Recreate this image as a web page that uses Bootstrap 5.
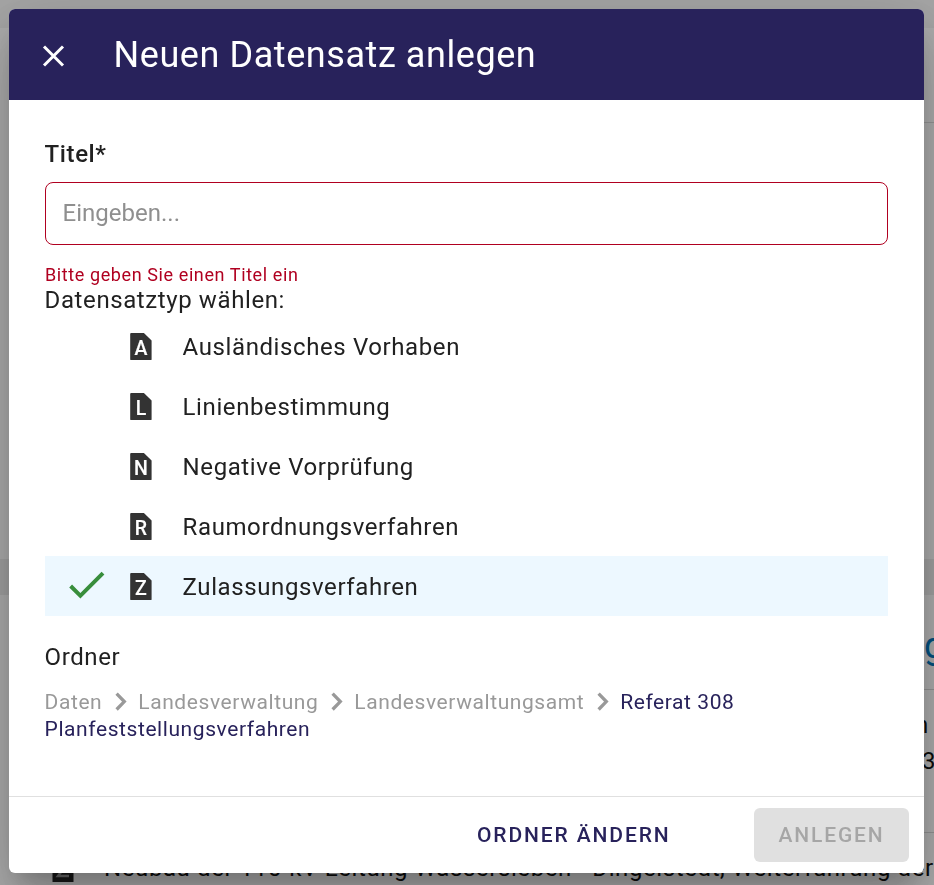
<!DOCTYPE html>
<html lang="de">
<head>
<meta charset="utf-8">
<meta name="viewport" content="width=device-width, initial-scale=1">
<title>Neuen Datensatz anlegen</title>
<link href="https://cdn.jsdelivr.net/npm/bootstrap@5.3.0/dist/css/bootstrap.min.css" rel="stylesheet">
<style>
  body { font-family: Roboto, "Liberation Sans", sans-serif; font-size: 24px; letter-spacing: .6px; color: #212121; height: 885px; }
  .page-top { height: 28px; background: #f5f5f5; }
  .page-toolbar { height: 95px; border-bottom: 1px solid #dcdcdc; margin-left: 24px; }
  .page-blank { height: 436px; }
  .page-band { height: 36px; background: #eeeeee; }
  .page-headline { height: 95px; border-bottom: 1px solid #d8d8d8; color: #0277bd; font-size: 36px; margin-left: 24px; padding: 28px 0 0 900px; line-height: 46px; }
  .page-entry { height: 143px; border-bottom: 1px solid #d8d8d8; line-height: 36px; margin-left: 24px; padding-top: 17px; color: #111; }
  .page-entry div:first-child { padding-left: 891px; }
  .page-entry div:last-child { padding-left: 898px; }
  .page-row { height: 52px; padding: 14px 0 0 46px; line-height: 42px; color: #111; }
  .page-row svg { margin-right: 24px; }
  .overlay { background: rgba(0,0,0,.32); padding: 9px 10px 12px 9px; }
  .dialog { border-radius: 6px; background: #fff; box-shadow: 0 16.5px 22.5px -10.5px rgba(0,0,0,.2), 0 36px 57px 4.5px rgba(0,0,0,.14), 0 13.5px 69px 12px rgba(0,0,0,.12); }
  .dialog-head { height: 91px; background: #28225b; color: #fff; padding-left: 27px; }
  .dialog-head h1 { font-size: 36px; font-weight: 400; letter-spacing: .57px; line-height: 48px; margin-left: 41.5px; }
  .dialog-main { padding: 36px 36px 0 35.6px; }
  .title-label { font-weight: 500; line-height: 36px; margin-bottom: 10px; }
  .title-input.form-control { height: 63px; border: 1px solid #b00020; border-radius: 8px; font-size: 24px; letter-spacing: 0; padding: 0 17px 2px; background: #fff; }
  .title-input::placeholder { color: #8f8f8f; }
  .title-error { color: #b00020; font-size: 18px; letter-spacing: .6px; line-height: 24px; margin: 18px 0 0 .4px; }
  .type-caption { line-height: 27px; margin-bottom: 2px; }
  .type-item.list-group-item { height: 60px; background: transparent; color: #212121; padding: 1px 0 0 18px; border-radius: 0; }
  .type-item.chosen { background: #edf8ff; }
  .tick { width: 48px; margin: -4px 12px 0 0; }
  .type-item span:last-child { margin-left: 24px; line-height: 36px; }
  .type-item text { fill: #fff; stroke: #fff; stroke-width: .15px; font-size: 19.5px; font-weight: 500; letter-spacing: 0; text-anchor: middle; }
  .folder-caption { margin-top: 23px; line-height: 36px; }
  .folder-path { margin-top: 14px; font-size: 21px; letter-spacing: .58px; line-height: 27px; color: #999; }
  .folder-path svg { margin: -4px 11.6px 0 12.4px; }
  .folder-path b { color: #28225b; font-weight: 400; }
  .dialog-foot { height: 77px; border-top: 1px solid #e0e0e0; padding-right: 15px; }
  .act.btn { font-size: 21px; font-weight: 500; letter-spacing: 1.875px; height: 54px; padding: 0 24px; border: 0; border-radius: 6px; color: #28225b; line-height: 54px; }
  .act.btn:disabled { background: #e0e0e0; color: #a6a6a6; opacity: 1; width: 155px; margin-left: 59.5px; }
</style>
<script src="https://cdn.jsdelivr.net/npm/bootstrap@5.3.0/dist/js/bootstrap.bundle.min.js"></script>
</head>
<body class="overflow-hidden bg-white">
<svg class="d-none" aria-hidden="true">
  <symbol id="sheet" viewBox="0 0 36 36"><path d="M8.100 4.100H20.900l7.700 7.300v18.800q0 .9-.9.9H8.100q-.9 0-.9-.9V5q0-.9.9-.9z" fill="#333"/></symbol>
  <symbol id="next" viewBox="0 0 12 19"><path d="M1.600 1.700 9.300 9.600 1.600 17.500" fill="none" stroke="#999" stroke-width="3.300"/></symbol>
</svg>

<div aria-hidden="true">
  <div class="page-top"></div>
  <div class="page-toolbar"></div>
  <div class="page-blank"></div>
  <div class="page-band"></div>
  <div class="page-headline text-nowrap">g</div>
  <div class="page-entry text-nowrap"><div>n</div><div>3</div></div>
  <div class="page-row d-flex text-nowrap">
    <svg class="flex-shrink-0" width="34" height="38"><path d="M6.500 6h14l7 7v22h-21z" fill="#222"/><path d="M12 16h10l-10 13h11" fill="none" stroke="#999" stroke-width="2.500"/></svg>
    <span>Neubau der 110-kV-Leitung Wassersleben - Dingelstedt, Weiterführung der</span>
  </div>
</div>

<div class="overlay position-fixed top-0 start-0 w-100 h-100">
  <div class="dialog d-flex flex-column h-100 overflow-hidden" role="dialog" aria-labelledby="dlgTitle">
    <header class="dialog-head d-flex align-items-center">
      <svg width="36" height="36" viewBox="0 0 36 36"><path d="M8 9.500 27 28.500M27 9.500 8 28.500" stroke="#fff" stroke-width="3" fill="none"/></svg>
      <h1 class="mb-0" id="dlgTitle">Neuen Datensatz anlegen</h1>
    </header>

    <main class="dialog-main flex-grow-1">
      <label class="title-label d-block" for="titel">Titel*</label>
      <input class="form-control title-input" id="titel" type="text" placeholder="Eingeben...">
      <div class="title-error">Bitte geben Sie einen Titel ein</div>
      <div class="type-caption">Datensatztyp wählen:</div>

      <div class="list-group list-group-flush" id="types">
        <div class="list-group-item type-item border-0 d-flex align-items-center"><span class="tick"></span><svg width="36" height="36"><use href="#sheet"/><text x="17.900" y="25.600">A</text></svg><span>Ausländisches Vorhaben</span></div>
        <div class="list-group-item type-item border-0 d-flex align-items-center"><span class="tick"></span><svg width="36" height="36"><use href="#sheet"/><text x="17.900" y="25.600">L</text></svg><span>Linienbestimmung</span></div>
        <div class="list-group-item type-item border-0 d-flex align-items-center"><span class="tick"></span><svg width="36" height="36"><use href="#sheet"/><text x="17.900" y="25.600">N</text></svg><span>Negative Vorprüfung</span></div>
        <div class="list-group-item type-item border-0 d-flex align-items-center"><span class="tick"></span><svg width="36" height="36"><use href="#sheet"/><text x="17.900" y="25.600">R</text></svg><span>Raumordnungsverfahren</span></div>
        <div class="list-group-item type-item chosen border-0 d-flex align-items-center"><span class="tick d-flex"><svg width="48" height="48" viewBox=".3 .2 24 24"><path d="M9 16.170 4.830 12l-1.420 1.410L9 19 21 7l-1.410-1.410z" fill="#388e3c"/></svg></span><svg width="36" height="36"><use href="#sheet"/><text x="17.900" y="25.600">Z</text></svg><span>Zulassungsverfahren</span></div>
      </div>

      <div class="folder-caption">Ordner</div>
      <div class="folder-path"><span>Daten</span><svg width="12" height="19"><use href="#next"/></svg><span>Landesverwaltung</span><svg width="12" height="19"><use href="#next"/></svg><span>Landesverwaltungsamt</span><svg width="12" height="19"><use href="#next"/></svg><b>Referat 308</b> <b>Planfeststellungsverfahren</b></div>
    </main>

    <footer class="dialog-foot d-flex align-items-center justify-content-end">
      <button class="btn act" type="button">ORDNER ÄNDERN</button>
      <button class="btn act" type="button" disabled>ANLEGEN</button>
    </footer>
  </div>
</div>
</body>
</html>
